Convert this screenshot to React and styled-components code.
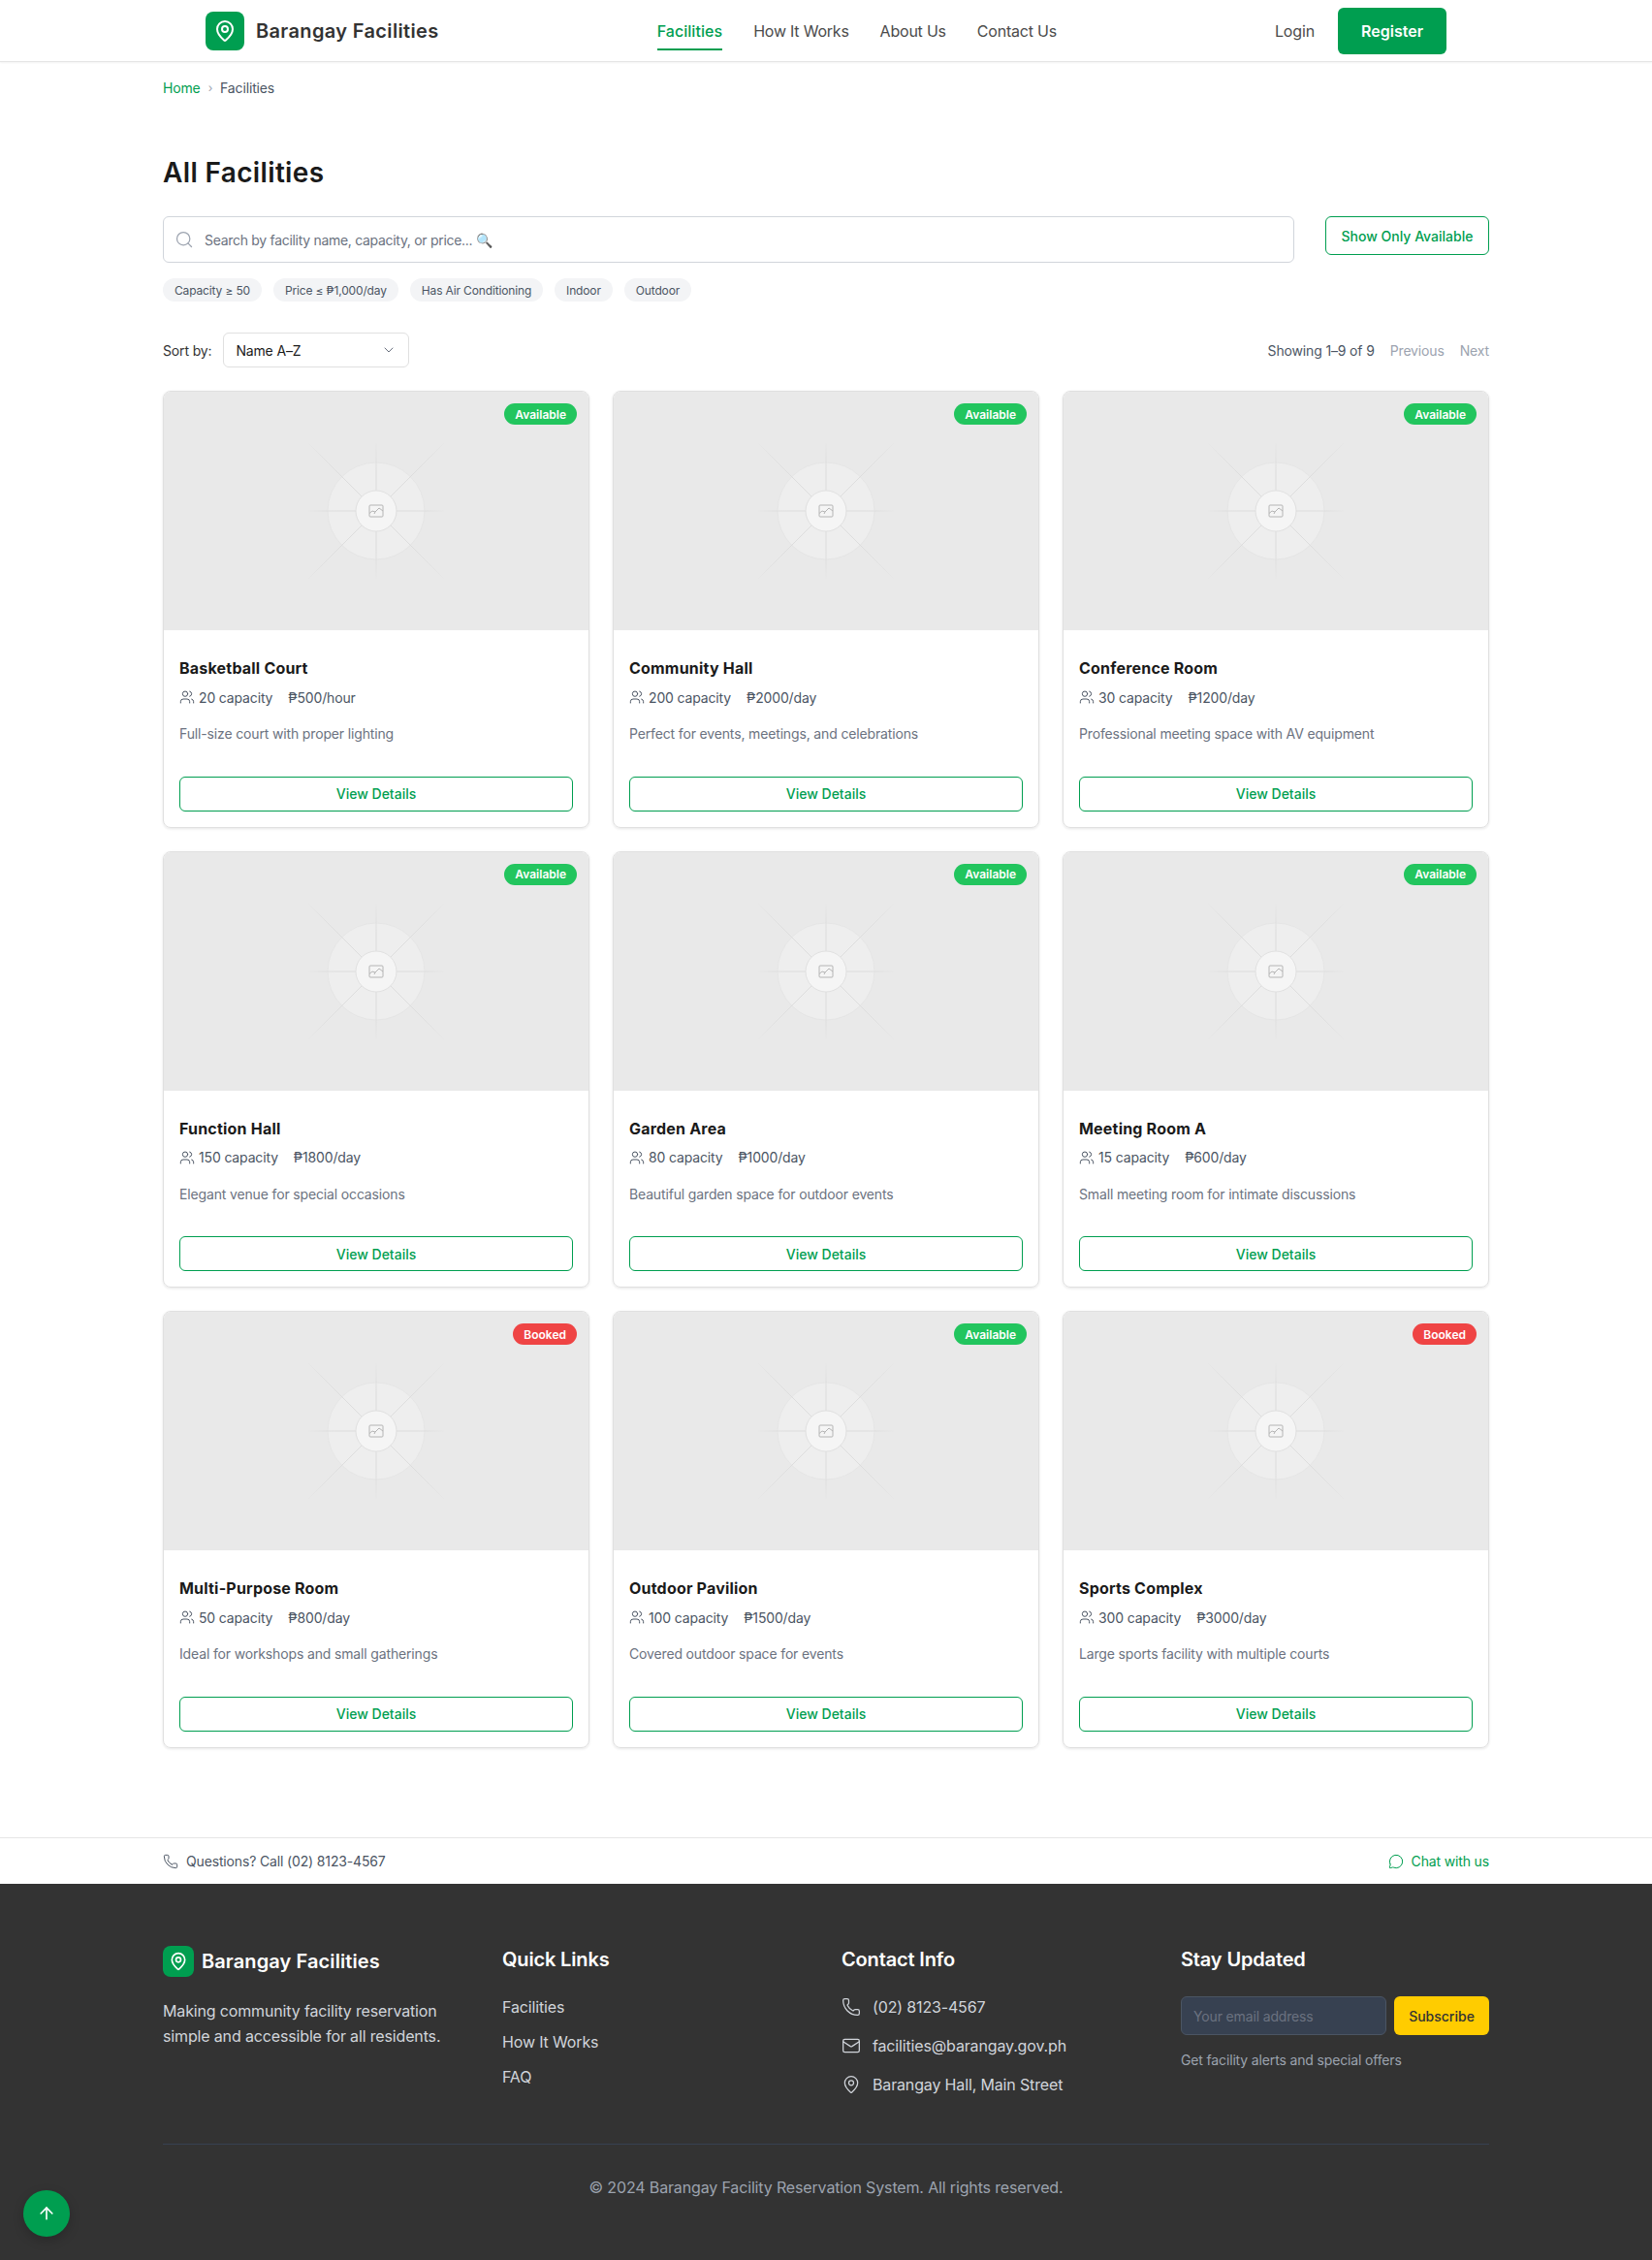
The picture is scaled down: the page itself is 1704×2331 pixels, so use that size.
import styled, { createGlobalStyle } from "styled-components";
import {
  ArrowUp,
  ChevronDown,
  Mail,
  MapPin,
  MessageCircle,
  Phone,
  Search,
  Users,
} from "lucide-react";

const GREEN = "#009e50";

const facilities = [
  { name: "Basketball Court", capacity: 20, price: "₱500/hour", desc: "Full-size court with proper lighting", status: "Available" },
  { name: "Community Hall", capacity: 200, price: "₱2000/day", desc: "Perfect for events, meetings, and celebrations", status: "Available" },
  { name: "Conference Room", capacity: 30, price: "₱1200/day", desc: "Professional meeting space with AV equipment", status: "Available" },
  { name: "Function Hall", capacity: 150, price: "₱1800/day", desc: "Elegant venue for special occasions", status: "Available" },
  { name: "Garden Area", capacity: 80, price: "₱1000/day", desc: "Beautiful garden space for outdoor events", status: "Available" },
  { name: "Meeting Room A", capacity: 15, price: "₱600/day", desc: "Small meeting room for intimate discussions", status: "Available" },
  { name: "Multi-Purpose Room", capacity: 50, price: "₱800/day", desc: "Ideal for workshops and small gatherings", status: "Booked" },
  { name: "Outdoor Pavilion", capacity: 100, price: "₱1500/day", desc: "Covered outdoor space for events", status: "Available" },
  { name: "Sports Complex", capacity: 300, price: "₱3000/day", desc: "Large sports facility with multiple courts", status: "Booked" },
];

const chips = ["Capacity ≥ 50", "Price ≤ ₱1,000/day", "Has Air Conditioning", "Indoor", "Outdoor"];

const GlobalStyle = createGlobalStyle`
  * {
    box-sizing: border-box;
  }

  body {
    margin: 0;
    background: #fff;
    color: #1a1a1a;
    font-family: Inter, "Noto Sans", sans-serif;
    letter-spacing: -0.15px;
  }
`;

const Page = styled.div`
  position: relative;
  width: 100%;
  height: 2331px;
  overflow: hidden;
`;

const Header = styled.header`
  height: 64px;
  border-bottom: 1px solid #e5e5e5;
  box-shadow: 0 1px 2px rgba(0, 0, 0, 0.05);
`;

const HeaderInner = styled.div`
  width: 1280px;
  height: 63px;
  margin: 0 auto;
  display: flex;
  justify-content: space-between;
  align-items: center;
`;

const Brand = styled.div`
  display: flex;
  align-items: center;
  gap: 12px;
`;

const LogoBox = styled.div`
  width: ${(p) => p.$size}px;
  height: ${(p) => p.$size}px;
  border-radius: 8px;
  background: ${GREEN};
  color: #fff;
  display: flex;
  align-items: center;
  justify-content: center;
  flex-shrink: 0;
`;

const BrandName = styled.span`
  font-size: 20px;
  font-weight: 600;
  letter-spacing: 0.35px;
  color: #333;
`;

const Nav = styled.nav`
  display: flex;
  gap: 32px;
  height: 40px;
`;

const NavLink = styled.a`
  height: 40px;
  display: flex;
  align-items: center;
  font-size: 16px;
  font-weight: ${(p) => (p.$active ? 500 : 400)};
  letter-spacing: ${(p) => (p.$active ? "0.05px" : "-0.22px")};
  color: ${(p) => (p.$active ? GREEN : "#4b4b4b")};
  border-bottom: 2px solid ${(p) => (p.$active ? GREEN : "transparent")};
  padding-top: 2px;
`;

const HeaderActions = styled.div`
  display: flex;
  align-items: center;
  gap: 24px;
`;

const LoginLink = styled.a`
  font-size: 16px;
  color: #4b4b4b;
`;

const RegisterBtn = styled.button`
  width: 112px;
  height: 48px;
  border: 0;
  border-radius: 6px;
  background: ${GREEN};
  color: #fff;
  font: 600 16px Inter, sans-serif;
`;

const Container = styled.main`
  width: 1368px;
  margin: 0 auto;
`;

const Breadcrumb = styled.div`
  display: flex;
  align-items: center;
  gap: 8px;
  height: 20px;
  margin-top: 16px;
  font-size: 14px;
  color: #4b5563;

  a {
    color: ${GREEN};
  }

  i {
    font-style: normal;
    color: #9ca3af;
    font-size: 12px;
  }
`;

const Title = styled.h1`
  margin: 60px 0 27px;
  height: 36px;
  font-size: 28px;
  line-height: 36px;
  font-weight: 600;
  letter-spacing: 0.35px;
  color: #1a1a1a;
`;

const SearchRow = styled.div`
  display: flex;
  gap: 32px;
  align-items: flex-start;
`;

const SearchBox = styled.label`
  flex: 1;
  height: 48px;
  padding: 0 11px;
  display: flex;
  align-items: center;
  gap: 9px;
  border: 1px solid #d1d5db;
  border-radius: 6px;
  color: #9ca3af;
`;

const SearchInput = styled.input`
  flex: 1;
  border: 0;
  outline: 0;
  background: none;
  font: 400 14px Inter, sans-serif;
  letter-spacing: -0.3px;
  color: #333;

  &::placeholder {
    color: #6b7280;
    opacity: 1;
  }
`;

const ShowBtn = styled.button`
  width: 169px;
  height: 40px;
  border: 1px solid ${GREEN};
  border-radius: 6px;
  background: #fff;
  color: ${GREEN};
  font: 500 14px Inter, sans-serif;
`;

const ChipRow = styled.div`
  display: flex;
  gap: 12px;
  margin-top: 16px;
`;

const Chip = styled.span`
  height: 24px;
  padding: 0 12px;
  display: flex;
  align-items: center;
  border-radius: 12px;
  background: #f3f4f6;
  color: #4b5563;
  font-size: 12px;
`;

const SortRow = styled.div`
  display: flex;
  align-items: center;
  justify-content: space-between;
  height: 36px;
  margin: 32px 0 24px;
`;

const SortGroup = styled.div`
  display: flex;
  align-items: center;
  gap: 12px;
  font-size: 14px;
  color: #333;
`;

const SortSelect = styled.div`
  width: 192px;
  height: 36px;
  padding: 0 12px;
  display: flex;
  align-items: center;
  justify-content: space-between;
  border: 1px solid #e0e0e0;
  border-radius: 6px;
  color: #1a1a1a;
  font-size: 14px;

  svg {
    color: #6b7280;
  }
`;

const Pager = styled.div`
  display: flex;
  align-items: center;
  gap: 16px;
  font-size: 14px;
  color: #4b5563;

  span + span {
    color: #9ca3af;
  }
`;

const Grid = styled.section`
  display: grid;
  grid-template-columns: repeat(3, 1fr);
  gap: 24px;
`;

const Card = styled.article`
  height: 450.5px;
  display: flex;
  flex-direction: column;
  border: 1px solid #e0e0e0;
  border-radius: 8px;
  overflow: hidden;
  box-shadow: 0 1px 3px rgba(0, 0, 0, 0.1);
`;

const CardImage = styled.div`
  position: relative;
  aspect-ratio: 16 / 9;
  display: flex;
  align-items: center;
  justify-content: center;
  background: #e9e9e9;
`;

const Badge = styled.span`
  position: absolute;
  top: 12px;
  right: 12px;
  height: 22px;
  padding: 0 11px;
  display: flex;
  align-items: center;
  border-radius: 11px;
  background: ${(p) => (p.$booked ? "#ef4444" : "#22c55e")};
  color: #fff;
  font-size: 12px;
  font-weight: 600;
  letter-spacing: 0;
`;

const CardBody = styled.div`
  flex: 1;
  padding: 28px 16px 16px;
  display: flex;
  flex-direction: column;
`;

const CardName = styled.h3`
  margin: 0;
  font-size: 16px;
  line-height: 22px;
  font-weight: 700;
  letter-spacing: 0.2px;
  color: #1a1a1a;
`;

const CardMeta = styled.div`
  display: flex;
  gap: 16px;
  margin-top: 9px;
  height: 20px;
  align-items: center;
  font-size: 14px;
  color: #4b5563;
`;

const Capacity = styled.span`
  display: flex;
  align-items: center;
  gap: 4px;
`;

const CardDesc = styled.p`
  margin: 18px 0 0;
  font-size: 14px;
  line-height: 20px;
  color: #6b7280;
`;

const DetailsBtn = styled.button`
  height: 36px;
  margin-top: auto;
  border: 1px solid ${GREEN};
  border-radius: 6px;
  background: #fff;
  color: ${GREEN};
  font: 500 14px Inter, sans-serif;
`;

const CallBar = styled.div`
  height: 48px;
  margin-top: 92.5px;
  border-top: 1px solid #e5e5e5;
`;

const CallInner = styled.div`
  width: 1368px;
  height: 47px;
  margin: 0 auto;
  display: flex;
  align-items: center;
  justify-content: space-between;
  font-size: 14px;
  color: #4b5563;
`;

const CallItem = styled.span`
  display: flex;
  align-items: center;
  gap: 8px;
  color: ${(p) => p.$color || "inherit"};
`;

const Footer = styled.footer`
  height: 389px;
  background: #333;
  padding-top: 64px;
`;

const FooterInner = styled.div`
  width: 1368px;
  margin: 0 auto;
`;

const FooterGrid = styled.div`
  height: 205px;
  display: grid;
  grid-template-columns: repeat(4, 1fr);
  gap: 32px;
  border-bottom: 1px solid #374151;
`;

const FooterBrand = styled.div`
  display: flex;
  align-items: center;
  gap: 8px;
  margin-bottom: 22px;
  font-size: 20px;
  font-weight: 600;
  letter-spacing: 0.1px;
  color: #fff;
`;

const FooterText = styled.p`
  margin: 0;
  font-size: 16px;
  line-height: 26px;
  color: #d1d5db;
`;

const ColTitle = styled.h4`
  margin: 0 0 23px;
  height: 28px;
  font-size: 20px;
  line-height: 28px;
  font-weight: 600;
  color: #fff;
`;

const LinkList = styled.div`
  display: flex;
  flex-direction: column;
  gap: 12px;
  font-size: 16px;
  line-height: 24px;
  color: #d1d5db;
`;

const ContactList = styled.div`
  display: flex;
  flex-direction: column;
  gap: 16px;
  font-size: 16px;
  line-height: 24px;
  color: #d1d5db;
`;

const ContactRow = styled.div`
  display: flex;
  align-items: center;
  gap: 12px;
`;

const SubscribeRow = styled.div`
  display: flex;
  gap: 8px;
  margin-top: 24px;
`;

const EmailInput = styled.input`
  width: 212px;
  height: 40px;
  padding: 0 12px;
  border: 1px solid #4b5563;
  border-radius: 6px;
  outline: 0;
  background: #374151;
  color: #fff;
  font: 400 14px Inter, sans-serif;
  letter-spacing: -0.15px;

  &::placeholder {
    color: #6b7280;
    opacity: 1;
  }
`;

const SubscribeBtn = styled.button`
  flex: 1;
  height: 40px;
  border: 0;
  border-radius: 6px;
  background: #ffcc00;
  color: #333;
  font: 500 14px Inter, sans-serif;
`;

const Helper = styled.p`
  margin: 16px 0 0;
  font-size: 14px;
  line-height: 20px;
  color: #9ca3af;
`;

const Copyright = styled.p`
  margin: 32px 0 0;
  text-align: center;
  font-size: 16px;
  line-height: 24px;
  color: #9ca3af;
`;

const BackToTop = styled.button`
  position: absolute;
  left: 24px;
  bottom: 24px;
  width: 48px;
  height: 48px;
  display: flex;
  align-items: center;
  justify-content: center;
  border: 0;
  border-radius: 50%;
  background: ${GREEN};
  color: #fff;
  box-shadow: 0 4px 12px rgba(0, 0, 0, 0.2);
`;

const RAYS = [
  [0, -1], [1, -1], [1, 0], [1, 1],
  [0, 1], [-1, 1], [-1, 0], [-1, -1],
];

function PlaceholderArt({ id }) {
  return (
    <svg width="160" height="160" viewBox="-80 -80 160 160" fill="none">
      <defs>
        <radialGradient id={`straight-${id}`} gradientUnits="userSpaceOnUse" cx="0" cy="0" r="72">
          <stop offset="0.5" stopColor="#dcdcdc" />
          <stop offset="0.72" stopColor="#dedede" />
          <stop offset="1" stopColor="#e8e8e8" />
        </radialGradient>
        <radialGradient id={`diagonal-${id}`} gradientUnits="userSpaceOnUse" cx="0" cy="0" r="100">
          <stop offset="0.5" stopColor="#dddddd" />
          <stop offset="0.75" stopColor="#e0e0e0" />
          <stop offset="1" stopColor="#e8e8e8" />
        </radialGradient>
      </defs>
      <circle r="50" fill="#eeeeee" stroke="#e5e5e5" />
      {RAYS.map(([x, y]) => {
        const diagonal = x !== 0 && y !== 0;
        const inner = diagonal ? 15 : 21;
        const outer = 70;
        return (
          <line
            key={`${x}${y}`}
            x1={x * inner}
            y1={y * inner}
            x2={x * outer}
            y2={y * outer}
            stroke={`url(#${diagonal ? "diagonal" : "straight"}-${id})`}
          />
        );
      })}
      <circle r="21" fill="#f5f5f5" stroke="#e0e0e0" />
      <rect x="-7" y="-6" width="14" height="12" rx="1" stroke="#b4b4b4" />
      <path d="M-7 2.5 L-4 0 L-1 1 L3 -3 L7 0 M-2 3 L-1 1" stroke="#b4b4b4" />
    </svg>
  );
}

function FacilityCard({ item, index }) {
  const booked = item.status === "Booked";
  return (
    <Card>
      <CardImage>
        <PlaceholderArt id={index} />
        <Badge $booked={booked}>{item.status}</Badge>
      </CardImage>
      <CardBody>
        <CardName>{item.name}</CardName>
        <CardMeta>
          <Capacity>
            <Users size={16} strokeWidth={1.5} />
            {item.capacity} capacity
          </Capacity>
          <span>{item.price}</span>
        </CardMeta>
        <CardDesc>{item.desc}</CardDesc>
        <DetailsBtn>View Details</DetailsBtn>
      </CardBody>
    </Card>
  );
}

export default function App() {
  return (
    <Page>
      <GlobalStyle />
      <Header>
        <HeaderInner>
          <Brand>
            <LogoBox $size={40}>
              <MapPin size={24} strokeWidth={2} />
            </LogoBox>
            <BrandName>Barangay Facilities</BrandName>
          </Brand>
          <Nav>
            <NavLink $active>Facilities</NavLink>
            <NavLink>How It Works</NavLink>
            <NavLink>About Us</NavLink>
            <NavLink>Contact Us</NavLink>
          </Nav>
          <HeaderActions>
            <LoginLink>Login</LoginLink>
            <RegisterBtn>Register</RegisterBtn>
          </HeaderActions>
        </HeaderInner>
      </Header>

      <Container>
        <Breadcrumb>
          <a>Home</a>
          <i>›</i>
          <span>Facilities</span>
        </Breadcrumb>
        <Title>All Facilities</Title>
        <SearchRow>
          <SearchBox>
            <Search size={20} strokeWidth={1.5} />
            <SearchInput placeholder="Search by facility name, capacity, or price... 🔍" />
          </SearchBox>
          <ShowBtn>Show Only Available</ShowBtn>
        </SearchRow>
        <ChipRow>
          {chips.map((chip) => (
            <Chip key={chip}>{chip}</Chip>
          ))}
        </ChipRow>
        <SortRow>
          <SortGroup>
            Sort by:
            <SortSelect>
              Name A–Z
              <ChevronDown size={16} strokeWidth={1.5} />
            </SortSelect>
          </SortGroup>
          <Pager>
            <span>Showing 1–9 of 9</span>
            <span>Previous</span>
            <span>Next</span>
          </Pager>
        </SortRow>
        <Grid>
          {facilities.map((item, index) => (
            <FacilityCard key={item.name} item={item} index={index} />
          ))}
        </Grid>
      </Container>

      <CallBar>
        <CallInner>
          <CallItem>
            <Phone size={16} strokeWidth={1.5} />
            Questions? Call (02) 8123-4567
          </CallItem>
          <CallItem $color={GREEN}>
            <MessageCircle size={16} strokeWidth={1.5} />
            Chat with us
          </CallItem>
        </CallInner>
      </CallBar>

      <Footer>
        <FooterInner>
          <FooterGrid>
            <div>
              <FooterBrand>
                <LogoBox $size={32}>
                  <MapPin size={20} strokeWidth={2} />
                </LogoBox>
                Barangay Facilities
              </FooterBrand>
              <FooterText>
                Making community facility reservation simple and accessible for all residents.
              </FooterText>
            </div>
            <div>
              <ColTitle>Quick Links</ColTitle>
              <LinkList>
                <a>Facilities</a>
                <a>How It Works</a>
                <a>FAQ</a>
              </LinkList>
            </div>
            <div>
              <ColTitle>Contact Info</ColTitle>
              <ContactList>
                <ContactRow>
                  <Phone size={20} strokeWidth={1.5} />
                  (02) 8123-4567
                </ContactRow>
                <ContactRow>
                  <Mail size={20} strokeWidth={1.5} />
                  facilities@barangay.gov.ph
                </ContactRow>
                <ContactRow>
                  <MapPin size={20} strokeWidth={1.5} />
                  Barangay Hall, Main Street
                </ContactRow>
              </ContactList>
            </div>
            <div>
              <ColTitle>Stay Updated</ColTitle>
              <SubscribeRow>
                <EmailInput placeholder="Your email address" />
                <SubscribeBtn>Subscribe</SubscribeBtn>
              </SubscribeRow>
              <Helper>Get facility alerts and special offers</Helper>
            </div>
          </FooterGrid>
          <Copyright>© 2024 Barangay Facility Reservation System. All rights reserved.</Copyright>
        </FooterInner>
      </Footer>

      <BackToTop>
        <ArrowUp size={20} strokeWidth={2} />
      </BackToTop>
    </Page>
  );
}
